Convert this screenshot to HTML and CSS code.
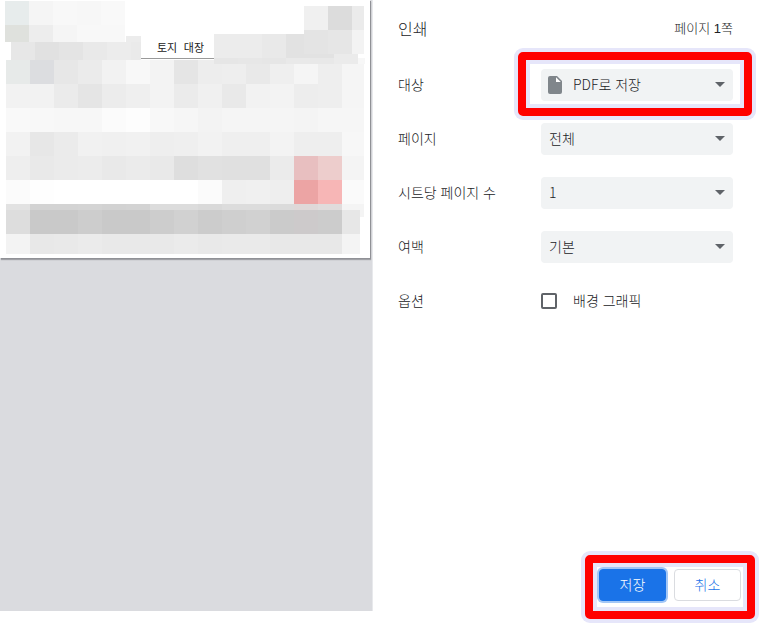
FILE: index.html
```html
<!DOCTYPE html>
<html lang="ko">
<head>
<meta charset="utf-8">
<meta name="viewport" content="width=device-width, initial-scale=1">
<title>인쇄</title>
<link rel="stylesheet" href="styles.css">
</head>
<body>
<main class="print-dialog">
  <section class="preview">
    <svg class="sheet" viewBox="0 0 370 258">
      <g id="mosaic" shape-rendering="crispEdges"></g>
      <path d="M141 58h73v1h-73z" fill="#999"/>
      <text class="sheet-title" x="157" y="52">토지 대장</text>
    </svg>
  </section>

  <form class="settings">
    <header class="settings-header">
      <h1>인쇄</h1>
      <span>페이지 <b>1</b>쪽</span>
    </header>

    <div class="row">
      <label for="target">대상</label>
      <div class="field highlight highlight-target">
        <svg class="file-icon" viewBox="0 0 14 18"><path d="M2 0h7l5 5v11a2 2 0 0 1-2 2H2a2 2 0 0 1-2-2V2a2 2 0 0 1 2-2z" fill="#80868b"/><path d="M8 1.2V6h4.8z" fill="#fff"/></svg>
        <select id="target" class="with-icon"><option>PDF로 저장</option></select>
        <svg class="arrow" viewBox="0 0 10 5"><path d="M0 0h10L5 5z"/></svg>
      </div>
    </div>
    <div class="row">
      <label for="pages">페이지</label>
      <div class="field">
        <select id="pages"><option>전체</option></select>
        <svg class="arrow" viewBox="0 0 10 5"><path d="M0 0h10L5 5z"/></svg>
      </div>
    </div>
    <div class="row">
      <label for="per-sheet">시트당 페이지 수</label>
      <div class="field">
        <select id="per-sheet"><option>1</option></select>
        <svg class="arrow" viewBox="0 0 10 5"><path d="M0 0h10L5 5z"/></svg>
      </div>
    </div>
    <div class="row">
      <label for="margins">여백</label>
      <div class="field">
        <select id="margins"><option>기본</option></select>
        <svg class="arrow" viewBox="0 0 10 5"><path d="M0 0h10L5 5z"/></svg>
      </div>
    </div>
    <div class="row">
      <span class="row-label">옵션</span>
      <div class="check">
        <input type="checkbox" id="background">
        <label for="background">배경 그래픽</label>
      </div>
    </div>

    <footer class="actions highlight highlight-actions">
      <button type="button" class="primary">저장</button>
      <button type="button">취소</button>
    </footer>
  </form>
</main>
<script src="script.js"></script>
</body>
</html>
```
FILE: styles.css
```css
* {
  box-sizing: border-box;
}

body {
  margin: 0;
  background: #fff;
  color: #202124;
  font: 300 14px/20px "Noto Sans CJK KR", sans-serif;
}

.print-dialog {
  display: grid;
  grid-template-columns: minmax(0, 1fr) 386px;
  min-height: 100vh;
}

.preview {
  margin-bottom: 12px;
  overflow: hidden;
  background: #dadbdf;
  border-right: 1px solid #e8e9ec;
}

.sheet {
  display: block;
  width: calc(100% - 2px);
  background: #fff;
  box-shadow: 1px 1px 0 #909196, 1px 2px 1px #a0a1a6;
}

.sheet-title {
  font: 11px "Liberation Mono", "Noto Sans CJK KR", monospace;
  fill: #222;
}

.settings {
  display: flex;
  flex-direction: column;
  padding: 0 26px 22px 25px;
}

.settings-header {
  display: flex;
  align-items: center;
  justify-content: space-between;
  height: 58px;
  padding-bottom: 2px;
  font-size: 13px;
}

.settings-header h1 {
  margin: 0;
  font-size: 16px;
  font-weight: inherit;
}

.settings-header b {
  font-family: "Liberation Sans", sans-serif;
  font-weight: 400;
}

.row {
  display: grid;
  grid-template-columns: minmax(0, 1fr) 192px;
  align-items: center;
  height: 54px;
}

label,
.row-label {
  padding-bottom: 2px;
}

.field,
.highlight {
  position: relative;
}

select {
  display: block;
  appearance: none;
  width: 100%;
  height: 32px;
  padding: 0 32px 2px 8px;
  border: 0;
  border-radius: 4px;
  background: #f1f3f4;
  color: inherit;
  font: inherit;
}

select.with-icon {
  padding-left: 32px;
}

.arrow {
  position: absolute;
  top: 13px;
  right: 8px;
  width: 10px;
  height: 5px;
  fill: #5f6368;
  pointer-events: none;
}

.file-icon {
  position: absolute;
  top: 7px;
  left: 7px;
  width: 14px;
  height: 18px;
  pointer-events: none;
}

.check {
  display: flex;
  align-items: center;
  gap: 16px;
}

.check input {
  appearance: none;
  width: 16px;
  height: 16px;
  margin: 0;
  border: 2px solid #5f6368;
  border-radius: 2px;
}

.check input:checked {
  background: #1a73e8;
}

.actions {
  display: flex;
  align-self: flex-end;
  gap: 8px;
  margin-top: auto;
  margin-right: -8px;
}

button {
  width: 67px;
  height: 32px;
  padding: 0 0 2px;
  border: 1px solid #dadce0;
  border-radius: 4px;
  background: #fff;
  color: #1a73e8;
  font: inherit;
}

button.primary {
  border-color: #1a73e8;
  background: #1a73e8;
  color: #fff;
  box-shadow: 0 0 0 2px #a3c7f6;
}

/* Red callout frame drawn around a control */
.highlight::after {
  content: "";
  position: absolute;
  border: 8px solid #f00;
  border-radius: 5px;
  box-shadow: 0 0 0 4px #e6e6fa, inset 0 0 0 4px #e6e6fa;
  pointer-events: none;
}

.highlight-target::after {
  inset: -17px -19px -15px -23px;
}

.highlight-actions::after {
  inset: -14px -14px -18px;
}
```
FILE: script.js
```js
// Pixelated document content: each band is [x, y, height, right edge, cell colours].
// Cells are 24 units wide; the last one is cut at the right edge.
const bands = [
  [5, 1, 24, 125, "e7ecec f5f5f5 f8f8f8 f7f7f7 f9f9f9"],
  [5, 25, 17, 126, "dfe1dd ededed f5f5f5 f8f8f8 f8f8f8"],
  [126, 36, 6, 141, "ececec"],
  [11, 42, 18, 141, "e7e7e7 e1e1e1 e4e4e4 e9e9e9 ececec eaeaea"],
  [214, 34, 24, 310, "ececec ececec e9e9e9 e2e2e2"],
  [304, 6, 24, 364, "f0f0f0 dcdcdc ebebeb"],
  [304, 30, 24, 364, "e4e4e4 e6e6e6 f3f3f3"],
  [310, 54, 4, 334, "e2e2e2"],
  [6, 60, 24, 364, "e7eae9 dcdde0 e7e7e7 ebebeb f2f2f2 f8f8f8 f3f3f3 e5e5e5 ededed eeeeee e9e9e9 efefef f5f5f5 eeeeee f5f5f5"],
  [214, 58, 6, 334, "e6e6e6 e7e7e7 e6e6e6 e9e9e9 e8e8e8"],
  [334, 54, 10, 358, "ebebeb"],
  [358, 58, 6, 365, "f7f7f7"],
  [6, 84, 24, 364, "f2f2f2 f2f2f2 ebebeb e5e5e5 ececec efefef f3f3f3 ebebeb f0f0f0 e9e9e9 f2f2f2 f3f3f3 ededed eeeeee f5f5f5"],
  [6, 108, 24, 364, "f9f9f9 f8f8f8 f7f7f7 f7f7f7 fbfbfb fdfdfd f8f8f8 f6f6f6 f3f3f3 f5f5f5 f5f5f5 f5f5f5 f4f4f4 f6f6f6 f6f6f6"],
  [6, 132, 24, 364, "f2f2f2 e7e7e7 ebebeb f1f1f1 f0f0f0 f1f1f1 eeeeee efefef f2f2f2 efefef efefef f3f3f3 eeeeee eeeeee f7f7f7"],
  [6, 156, 24, 364, "eeeeee e9e9e9 ebebeb ececec e9e9e9 ebebeb e9e9e9 dedede e1e1e1 e0e0e0 e0e0e0 ebebeb e8bfc0 edcdcc f4f4f4"],
  [6, 180, 24, 364, "fbfbfb fefefe ffffff ffffff ffffff ffffff ffffff ffffff fbfbfb efefef f0f0f0 eeeeee eca4a4 f7b6b6 fafafa"],
  [342, 204, 13, 364, "f4f4f4"],
  [6, 204, 6, 342, "e2e2e2 d3d3d3 d3d3d3 d4d4d4 d2d2d2 d3d3d3 dcdcdc dcdcdc d9d9d9 dcdcdc dcdcdc dbdbdb dfd8d8 e0dcdc"],
  [6, 210, 24, 360, "dddddd c9c9c9 c9c9c9 cdcdcd c9c9c9 c9c9c9 cdcdcd d1d1d1 cccccc cfcfcf d1d1d1 cbcbcb cdcacb cccccc e7e7e7"],
  [6, 234, 20, 360, "f3f3f3 e8e8e8 e9e9e9 ebebeb e9e9e9 e9e9e9 e9e9e9 ebebeb e9e9e9 eaeaea eaeaea e8e8e8 e8e8e8 e8e8e8 f4f4f4"]
];

const mosaic = document.getElementById("mosaic");
for (const [left, y, height, right, colours] of bands) {
  colours.split(" ").forEach((colour, i) => {
    const x = left + i * 24;
    const cell = document.createElementNS("http://www.w3.org/2000/svg", "rect");
    cell.setAttribute("x", x);
    cell.setAttribute("y", y);
    cell.setAttribute("width", Math.min(24, right - x));
    cell.setAttribute("height", height);
    cell.setAttribute("fill", "#" + colour);
    mosaic.append(cell);
  });
}
```
